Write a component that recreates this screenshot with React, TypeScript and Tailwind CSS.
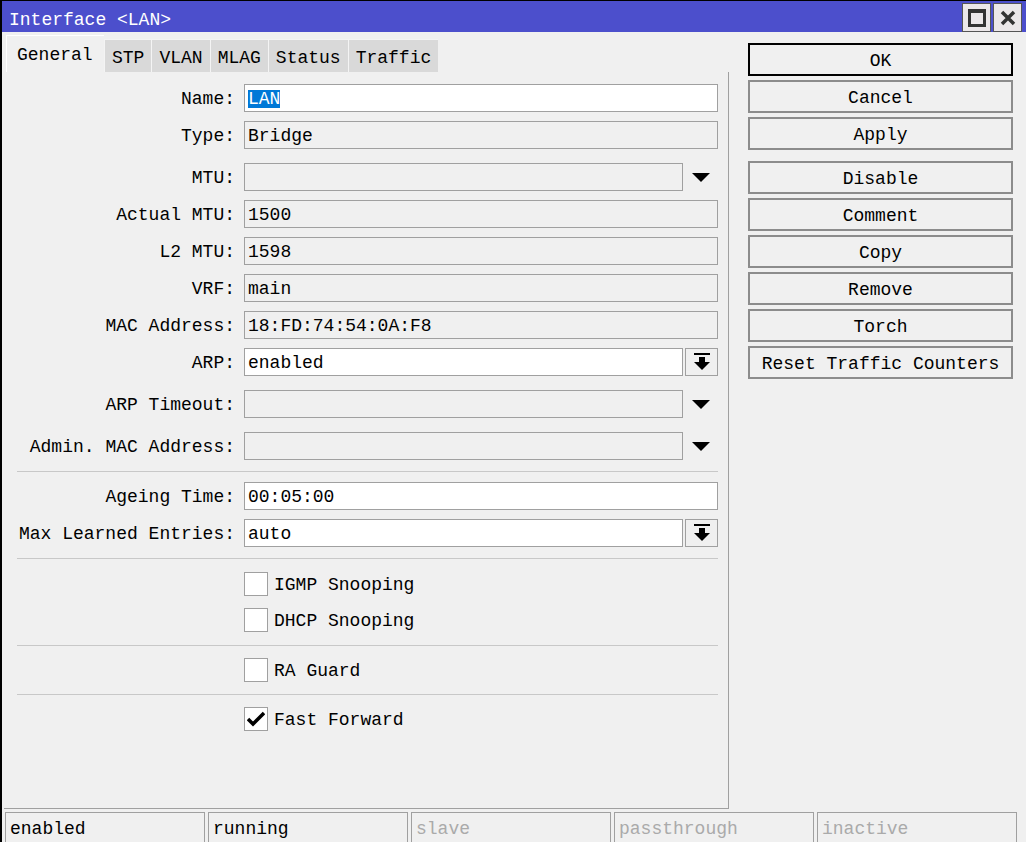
import * as React from "react";

type Row = {
  label: string;
  value?: string;
  editable?: boolean;
  extra?: "tri" | "btn";
  mt: string;
  selected?: boolean;
};

const ROWS: Row[] = [
  { label: "Name:", value: "LAN", editable: true, mt: "mt-0", selected: true },
  { label: "Type:", value: "Bridge", mt: "mt-[9px]" },
  { label: "MTU:", extra: "tri", mt: "mt-[14px]" },
  { label: "Actual MTU:", value: "1500", mt: "mt-[9px]" },
  { label: "L2 MTU:", value: "1598", mt: "mt-[9px]" },
  { label: "VRF:", value: "main", mt: "mt-[9px]" },
  { label: "MAC Address:", value: "18:FD:74:54:0A:F8", mt: "mt-[9px]" },
  { label: "ARP:", value: "enabled", editable: true, extra: "btn", mt: "mt-[9px]" },
  { label: "ARP Timeout:", extra: "tri", mt: "mt-[14px]" },
  { label: "Admin. MAC Address:", extra: "tri", mt: "mt-[14px]" },
];

const ROWS2: Row[] = [
  { label: "Ageing Time:", value: "00:05:00", editable: true, mt: "mt-0" },
  { label: "Max Learned Entries:", value: "auto", editable: true, extra: "btn", mt: "mt-[9px]" },
];

const TABS = ["STP", "VLAN", "MLAG", "Status", "Traffic"];

const BUTTONS = [
  "Cancel",
  "Apply",
  "",
  "Disable",
  "Comment",
  "Copy",
  "Remove",
  "Torch",
  "Reset Traffic Counters",
];

const STATUS = [
  { text: "enabled", on: true },
  { text: "running", on: true },
  { text: "slave", on: false },
  { text: "passthrough", on: false },
  { text: "inactive", on: false },
];

const DownTriangle = () => (
  <svg width="18" height="9" viewBox="0 0 18 9">
    <polygon points="0,0 18,0 9,9" fill="#000" />
  </svg>
);

const DropButton = () => (
  <div className="ml-[2px] flex h-[28px] w-[33px] items-center justify-center border border-[#a0a0a0] bg-[#f0f0f0]">
    <svg width="16" height="18" viewBox="0 0 16 18">
      <rect x="0" y="0" width="16" height="2" fill="#000" />
      <rect x="5" y="4" width="6" height="5" fill="#000" />
      <polygon points="0,9 16,9 8,17" fill="#000" />
    </svg>
  </div>
);

const FormRow = ({ row }: { row: Row }) => (
  <div className={`flex items-center ${row.mt}`}>
    <div className="w-[231px] pt-[2px] text-right">{row.label}</div>
    <div
      className={`ml-[9px] flex h-[28px] items-center border border-[#a0a0a0] pl-[3px] pt-[2px] ${
        row.extra ? "w-[439px]" : "w-[474px]"
      } ${row.editable ? "bg-white" : "bg-[#f0f0f0]"}`}
    >
      {row.value &&
        (row.selected ? (
          <span className="bg-[#0078d7] text-white">{row.value}</span>
        ) : (
          <span>{row.value}</span>
        ))}
    </div>
    {row.extra === "tri" && (
      <div className="flex w-[35px] justify-center">
        <DownTriangle />
      </div>
    )}
    {row.extra === "btn" && <DropButton />}
  </div>
);

const Separator = ({ mt }: { mt: string }) => (
  <div className={`ml-[13px] h-px w-[701px] bg-[#c8c8c8] ${mt}`} />
);

const Check = ({ label, checked, mt }: { label: string; checked?: boolean; mt: string }) => (
  <div className={`flex h-[24px] items-center ${mt}`}>
    <div className="ml-[240px] flex h-[24px] w-[24px] items-center justify-center border border-[#a0a0a0] bg-white">
      {checked && (
        <svg width="18" height="16" viewBox="0 0 18 16">
          <path d="M1 8 L6 13 L17 2" stroke="#000" strokeWidth="3.5" fill="none" />
        </svg>
      )}
    </div>
    <span className="ml-[6px] pt-[2px]">{label}</span>
  </div>
);

export default function App() {
  return (
    <div className="flex h-[842px] w-[1026px] flex-col overflow-hidden border-l-2 border-t border-black bg-[#f0f0f0] font-['Liberation_Mono',monospace] text-[18px] leading-none text-black">
      {/* title bar */}
      <div className="flex h-[31px] shrink-0 items-center bg-[#4c4fcc] pl-[7px] text-white">
        <span className="flex-1 pt-[6px]">Interface &lt;LAN&gt;</span>
        <div className="mr-[4px] mt-[2px] flex gap-[2px]">
          <div className="flex h-[29px] w-[29px] items-center justify-center border border-[#555] bg-[#ebe7e9]">
            <svg width="18" height="18" viewBox="0 0 18 18">
              <rect x="1.5" y="1.5" width="15" height="15" stroke="#333" strokeWidth="3" fill="none" />
              <rect x="0" y="0" width="18" height="4" fill="#333" />
            </svg>
          </div>
          <div className="flex h-[29px] w-[29px] items-center justify-center border border-[#555] bg-[#ebe7e9]">
            <svg width="16" height="16" viewBox="0 0 16 16">
              <path d="M2 2 L14 14 M14 2 L2 14" stroke="#333" strokeWidth="3.5" />
            </svg>
          </div>
        </div>
      </div>

      <div className="flex h-[778px] shrink-0">
        {/* left: tabs and form */}
        <div className="ml-[2px] flex w-[725px] flex-col">
          <div className="flex h-[40px] items-end pl-[2px]">
            <div className="flex h-[37px] w-[98px] items-center border-l border-t border-white bg-[#f0f0f0] pl-[10px] pt-[2px]">
              General
            </div>
            {TABS.map((t) => (
              <div
                key={t}
                className="flex h-[33px] items-center border-l border-t border-[#f4f4f4] bg-[#d9d9d9] px-[7px] pt-[3px]"
              >
                {t}
              </div>
            ))}
          </div>
          <div className="flex h-[737px] flex-col border-b border-r border-[#a0a0a0] pt-[12px]">
            {ROWS.map((r) => (
              <FormRow key={r.label} row={r} />
            ))}
            <Separator mt="mt-[11px]" />
            <div className="mt-[10px] flex flex-col">
              {ROWS2.map((r) => (
                <FormRow key={r.label} row={r} />
              ))}
            </div>
            <Separator mt="mt-[11px]" />
            <Check label="IGMP Snooping" mt="mt-[13px]" />
            <Check label="DHCP Snooping" mt="mt-[12px]" />
            <Separator mt="mt-[13px]" />
            <Check label="RA Guard" mt="mt-[12px]" />
            <Separator mt="mt-[12px]" />
            <Check label="Fast Forward" checked mt="mt-[12px]" />
          </div>
        </div>

        {/* right: action buttons */}
        <div className="ml-[19px] flex w-[265px] flex-col pt-[11px]">
          <div className="flex h-[33px] items-center justify-center border-2 border-black pt-[2px]">OK</div>
          {BUTTONS.map((b, i) =>
            b === "" ? (
              <div key={i} className="h-[7px]" />
            ) : (
              <div
                key={b}
                className="mt-[4px] flex h-[33px] items-center justify-center border-2 border-[#8c8c8c] pt-[2px]"
              >
                {b}
              </div>
            )
          )}
        </div>
      </div>

      {/* status bar */}
      <div className="mt-[2px] flex gap-[3px] pl-[3px]">
        {STATUS.map((s) => (
          <div
            key={s.text}
            className={`flex h-[34px] w-[200px] items-start border-l border-r border-t border-[#a0a0a0] pl-[4px] pt-[7px] ${
              s.on ? "text-black" : "text-[#aaaaaa]"
            }`}
          >
            {s.text}
          </div>
        ))}
      </div>
    </div>
  );
}
